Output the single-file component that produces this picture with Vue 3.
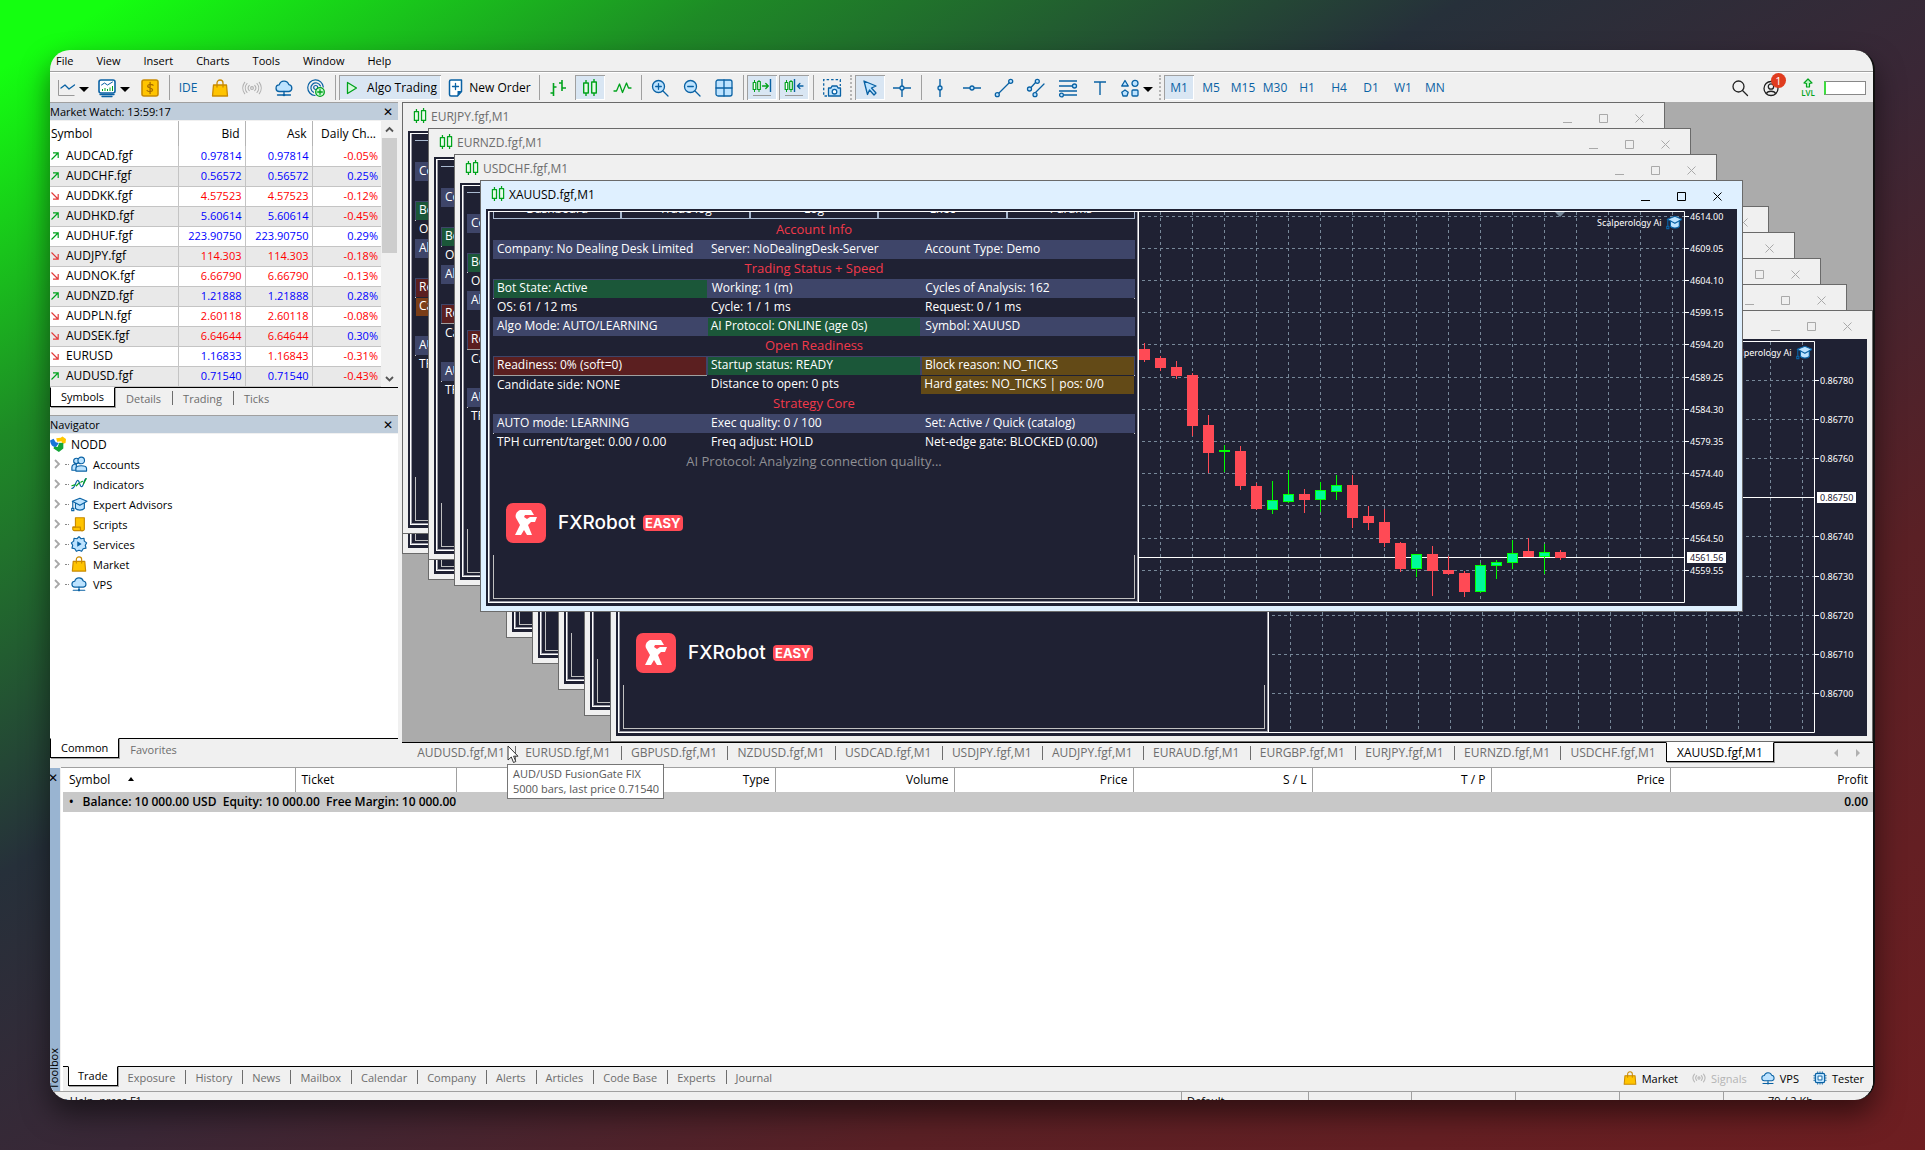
<script setup>
const menus = ['File', 'View', 'Insert', 'Charts', 'Tools', 'Window', 'Help']

const B = '#0a62a4'
const L = '#bde3ff'
const G = '#00a31c'
const Y = '#ffc400'
const O = '#c98a00'
const s = (c, w = 1.3) => `fill="none" stroke="${c}" stroke-width="${w}" stroke-linecap="round" stroke-linejoin="round"`
const f = (fill, c, w = 1.3) => `fill="${fill}" stroke="${c}" stroke-width="${w}" stroke-linejoin="round"`

const icons = {
  line: `<path d="M1.500 1v15.500h16" fill="none" stroke="#999"/><path d="M4 9l4-3 4 4 5.500-4" ${s(B)}/>`,
  indicators: `<rect x="1" y="1" width="16" height="13" rx="2" ${f('#fff', B, 1.6)}/><path d="M3.500 6l3-2 3 2 5-3" ${s(B, 1)}/><path d="M4.500 12v-2M7 12V9M9.500 12v-2M12 12V8.500M14.500 12V7" stroke="${G}" fill="none"/><path d="M2 15.500h14M4 17.500h10" ${s(B)}/>`,
  dollar: `<rect x="1" y="1" width="16" height="16" rx="2" ${f(Y, O, 1.6)}/><path d="M12 6.200C11 5 7 4.800 6.600 7c-.2 2.200 5 1.500 5 4-.3 2.200-4.500 2-5.500.500M9.100 3.500v11" ${s('#a86c00')}/>`,
  bag: `<path d="M2.500 6h13l1 11h-15z" ${f(Y, O)}/><path d="M6 8V4a3 3 0 0 1 6 0v4" ${s(O)}/>`,
  signal: `<g ${s('#b0b0b0', 1.1)}><circle cx="9" cy="9" r="1.400"/><path d="M6.300 6.300a4 4 0 0 0 0 5.400M11.700 6.300a4 4 0 0 1 0 5.400M4 4.500a7 7 0 0 0 0 9M14 4.500a7 7 0 0 1 0 9M1.700 3.300a9.500 9.500 0 0 0 0 11.400M16.300 3.300a9.500 9.500 0 0 1 0 11.400"/></g>`,
  cloud: `<path d="M4.500 12.500a3.300 3.300 0 0 1-.3-6.600 5 5 0 0 1 9.600-.3 3.500 3.500 0 0 1 .2 6.900z" ${f(L, B)}/><path d="M9 12.500v3M2.500 16h13" ${s(B)}/><circle cx="9" cy="16" r="1.300" fill="${B}"/>`,
  hosting: `<g ${s(B, 1.2)}><path d="M8 16.500A7.800 7.800 0 1 1 16.300 8M6.500 13.300A5 5 0 1 1 13.500 7"/><circle cx="8.700" cy="8.500" r="2"/></g><circle cx="13" cy="13" r="4.300" ${f('#c9f7d0', G)}/><path d="M13 10.700v4.600M10.700 13h4.600" ${s(G)}/>`,
  play: `<path d="M4.500 3.500l9 5.500-9 5.500z" ${f('#d5f8dc', G)}/>`,
  order: `<path d="M2.500 2.500a1.500 1.500 0 0 1 1.500-1.500h10.500v11.500l-4 4.500h-6.500a1.500 1.500 0 0 1-1.500-1.500z" ${f('#fff', B, 1.5)}/><path d="M14.500 12h-4v5z" fill="${B}"/><path d="M8.500 4.500v6M5.500 7.500h6" ${s(B)}/>`,
  bars: `<path d="M4.500 4v13M1.500 14h3M4.500 8h3M13 1v11M10 4h3M13 9h4" fill="none" stroke="${G}" stroke-width="1.600"/>`,
  candles: `<path d="M5 1v3M5 14v3M13 0v3M13 14v3" stroke="${G}" stroke-width="1.400"/><rect x="2.700" y="4" width="4.600" height="10" ${f('#e6fbe9', G, 1.4)}/><rect x="10.700" y="3" width="4.600" height="11" ${f('#e6fbe9', G, 1.4)}/>`,
  zig: `<path d="M1 12h2.500l3-7 3 8.500 4-9.500 2 5H18" ${s(G)}/>`,
  zoomin: `<circle cx="7.500" cy="7.500" r="6" ${f(L, B)}/><path d="M12 12l5 5M4.700 7.500h5.600M7.500 4.700v5.600" ${s(B)}/>`,
  zoomout: `<circle cx="7.500" cy="7.500" r="6" ${f(L, B)}/><path d="M12 12l5 5M4.700 7.500h5.600" ${s(B)}/>`,
  tile: `<rect x="1" y="1" width="16" height="16" rx="2" ${f(L, B)}/><path d="M9 1v16M1 9h16" ${s(B)}/>`,
  scroll: `<path d="M1.500 1v12M6 1v12" stroke="${G}"/><rect x=".2" y="3.500" width="2.600" height="7" ${f('#fff', G, 1.2)}/><rect x="4.700" y="2.500" width="2.600" height="8" ${f('#fff', G, 1.2)}/><path d="M9.500 7h5.500M12.800 4.500L15.300 7l-2.500 2.500" ${s(G)}/><path d="M17.500 0v13" stroke="${B}" stroke-width="1.400"/><path d="M0 16.500h18" stroke="#999"/>`,
  shift: `<path d="M1.500 1v12M6 1v12" stroke="${G}"/><rect x=".2" y="3.500" width="2.600" height="7" ${f('#fff', G, 1.2)}/><rect x="4.700" y="2.500" width="2.600" height="8" ${f('#fff', G, 1.2)}/><path d="M9.500 0v13" stroke="${B}" stroke-width="1.400"/><path d="M12.500 7H18M14.900 4.500L12.400 7l2.500 2.500" ${s(B)}/><path d="M0 16.500h18" stroke="#999"/>`,
  camera: `<path d="M4 17H.7V.7h16.600V7" fill="none" stroke="${B}" stroke-width="1.300" stroke-dasharray="2.500 2"/><path d="M5.500 9h2.500l1-2h5l1 2h2.500v8h-12z" ${f(L, B)}/><circle cx="11.500" cy="12.700" r="2.300" ${f('#fff', B)}/>`,
  cursor: `<path d="M3 2l12 5-4.500 2 4.500 5-2 2-4.500-5-2 4.500z" ${f(L, B)}/>`,
  cross: `<path d="M9 0v7M9 11v7M0 9h7M11 9h7" stroke="${B}" stroke-width="1.400"/><circle cx="9" cy="9" r="2" ${f(L, B)}/>`,
  vline: `<path d="M9 0v7M9 11v7" stroke="${B}" stroke-width="1.400"/><circle cx="9" cy="9" r="2" ${f(L, B)}/>`,
  hline: `<path d="M0 9h7M11 9h7" stroke="${B}" stroke-width="1.400"/><circle cx="9" cy="9" r="2" ${f(L, B)}/>`,
  trend: `<path d="M3.500 14.500l11-11" ${s(B)}/><circle cx="2.300" cy="15.700" r="2" ${f(L, B)}/><circle cx="15.700" cy="2.300" r="2" ${f(L, B)}/>`,
  channel: `<path d="M3.500 9l5.500-6M8 14l9-9" ${s(B)}/><circle cx="2.500" cy="10" r="2" ${f(L, B)}/><circle cx="10.300" cy="2.300" r="2" ${f(L, B)}/><circle cx="8" cy="15.700" r="2" ${f(L, B)}/>`,
  fibo: `<path d="M0 2h18M0 7h13.500M0 12h18M5 16h13" stroke="${B}" stroke-width="1.400"/><circle cx="15.500" cy="7" r="2" ${f(L, B)}/><circle cx="2.500" cy="16" r="1.900" ${f(L, B)}/>`,
  text: `<path d="M3 3h12M9 3v13" stroke="${B}" stroke-width="1.400"/>`,
  shapes: `<path d="M4 1.500l3.300 5.500H.7z" ${f(L, B)}/><circle cx="14" cy="4.300" r="3" ${f(L, B)}/><path d="M4 11l3.200 2.300-1.200 3.700H2l-1.200-3.700z" ${f(L, B)}/><rect x="11" y="11" width="6" height="6" rx="1" ${f(L, B)}/>`,
  search: `<circle cx="7.500" cy="7.500" r="5.500" ${s('#222')}/><path d="M11.500 11.500l5 5" ${s('#222')}/>`,
  user: `<circle cx="8" cy="9.500" r="7" ${s('#222')}/><circle cx="8" cy="7.500" r="2.700" ${s('#222')}/><path d="M3.500 14.500c1-3 8-3 9 0" ${s('#222')}/>`,
  level: `<path d="M9 1l4 4-2.500.5V9h-3V5.500L5 5z" ${f('#b9f5c3', G, 1.2)}/>`,
  accounts: `<circle cx="6" cy="5.500" r="3" ${f(L, B)}/><path d="M1 16v-3c0-3 3-4 5-4v7z" ${f(L, B)}/><circle cx="11.500" cy="5" r="3.700" ${f(L, B)}/><path d="M5.500 17v-3c0-4 12-4 12 0v3z" ${f(L, B)}/>`,
  wave: `<path d="M1 14c4 0 4-9 6.500-9s2 7 4.500 7 2-8 5-9" ${s(B)}/><path d="M1 11l3-1M6 11l3-3M11 7l2-1M14 9l3-6" ${s(G)}/>`,
  hat: `<path d="M5 8v6c2 2.500 8 2.500 10 0V8" ${f(L, B)}/><path d="M10 2.500L18 6l-8 4.500L1.500 6z" ${f(L, B)}/><path d="M2 6.500V14M.800 14h2.400v2.500H.800z" ${s(B)}/>`,
  script: `<path d="M5 2h10v12a2 2 0 0 1-2 2.500H4A2 2 0 0 1 2 14v-1.500h3z" ${f(Y, O)}/><path d="M2.500 12.500h8v2a2 2 0 0 0 2.500 2" ${s(O)}/>`,
  gear: `<path d="M9 .8l2.300 2.300 3.300-.6.4 3.300 2.600 1.900-1.500 2.700.8 3.200-3.200.8-1.700 2.800L9 16l-3 1.200-1.700-2.800-3.200-.8.8-3.200L.4 7.700 3 5.800l.4-3.300 3.300.6z" ${f(L, B)}/><path d="M7 6l5 3-5 3z" fill="${B}"/>`,
  chip: `<rect x="3" y="3" width="12" height="12" rx="2" ${f(L, B, 1.6)}/><rect x="6.500" y="6.500" width="5" height="5" ${f('#fff', B, 1.2)}/><path d="M6 .5V3M9 .5V3M12 .5V3M6 15v2.500M9 15v2.500M12 15v2.500M.5 6H3M.5 9H3M.5 12H3M15 6h2.500M15 9h2.500M15 12h2.500" stroke="${B}"/>`,
  logo: `<path d="M0 5l4-2 2.500 4 3.500 1-3 4c-3 1-6-1-7-7z" fill="#1673d8"/><path d="M7 2.500l5-.5 2-1.500 4 3-.5 4.500-4 1-.5-3-5 .500z" fill="#ffc800"/><path d="M15 8v6l-5 4-6-4 .5-2 4 .500 2-5z" fill="#13a538"/>`,
  sig2: `<g ${s('#b8b8b8', 1.4)}><circle cx="9" cy="9" r="1.400"/><path d="M6 6a4.500 4.500 0 0 0 0 6M12 6a4.500 4.500 0 0 1 0 6M3.200 4a8 8 0 0 0 0 10M14.800 4a8 8 0 0 1 0 10"/></g>`,
}

const tools = [
  { icon: 'line', caret: true }, { icon: 'indicators', caret: true }, { icon: 'dollar' }, { sep: 1 },
  { text: 'IDE' }, { icon: 'bag' }, { icon: 'signal' }, { icon: 'cloud' }, { icon: 'hosting' }, { sep: 1 },
  { icon: 'play', label: 'Algo Trading', on: true }, { icon: 'order', label: 'New Order' }, { sep: 1 },
  { icon: 'bars' }, { icon: 'candles', on: true }, { icon: 'zig' }, { sep: 1 },
  { icon: 'zoomin' }, { icon: 'zoomout' }, { icon: 'tile' }, { sep: 1 },
  { icon: 'scroll', on: true }, { icon: 'shift', on: true }, { sep: 1 }, { icon: 'camera' }, { sep: 2 },
  { icon: 'cursor', on: true }, { icon: 'cross' }, { sep: 1 },
  { icon: 'vline' }, { icon: 'hline' }, { icon: 'trend' }, { icon: 'channel' }, { icon: 'fibo' }, { icon: 'text' },
  { icon: 'shapes', caret: true }, { sep: 2 },
  { text: 'M1', on: true }, { text: 'M5' }, { text: 'M15' }, { text: 'M30' }, { text: 'H1' }, { text: 'H4' },
  { text: 'D1' }, { text: 'W1' }, { text: 'MN' },
]

const quotes = [
  ['AUDCAD.fgf', 1, '0.97814', '0.97814', 'uu', '-0.05%'],
  ['AUDCHF.fgf', 1, '0.56572', '0.56572', 'uu', '0.25%'],
  ['AUDDKK.fgf', 0, '4.57523', '4.57523', 'dd', '-0.12%'],
  ['AUDHKD.fgf', 1, '5.60614', '5.60614', 'uu', '-0.45%'],
  ['AUDHUF.fgf', 1, '223.90750', '223.90750', 'uu', '0.29%'],
  ['AUDJPY.fgf', 0, '114.303', '114.303', 'dd', '-0.18%'],
  ['AUDNOK.fgf', 0, '6.66790', '6.66790', 'dd', '-0.13%'],
  ['AUDNZD.fgf', 1, '1.21888', '1.21888', 'uu', '0.28%'],
  ['AUDPLN.fgf', 0, '2.60118', '2.60118', 'dd', '-0.08%'],
  ['AUDSEK.fgf', 0, '6.64644', '6.64644', 'dd', '0.30%'],
  ['EURUSD', 0, '1.16833', '1.16843', 'ud', '-0.31%'],
  ['AUDUSD.fgf', 1, '0.71540', '0.71540', 'uu', '-0.43%'],
]

const tree = [
  ['accounts', 'Accounts'], ['wave', 'Indicators'], ['hat', 'Expert Advisors'], ['script', 'Scripts'],
  ['gear', 'Services'], ['bag', 'Market'], ['cloud', 'VPS'],
]

const panelRows = [
  { head: 'Account Info' },
  { alt: 1, cells: [['Company: No Dealing Desk Limited'], ['Server: NoDealingDesk-Server'], ['Account Type: Demo']] },
  { head: 'Trading Status + Speed' },
  { alt: 1, cells: [['Bot State: Active', 'ok'], ['Working: 1 (m)'], ['Cycles of Analysis: 162']] },
  { cells: [['OS: 61 / 12 ms'], ['Cycle: 1 / 1 ms'], ['Request: 0 / 1 ms']] },
  { alt: 1, cells: [['Algo Mode: AUTO/LEARNING'], ['AI Protocol: ONLINE (age 0s)', 'ok'], ['Symbol: XAUUSD']] },
  { head: 'Open Readiness' },
  { alt: 1, cells: [['Readiness: 0% (soft=0)', 'bad'], ['Startup status: READY', 'ok'], ['Block reason: NO_TICKS', 'warn']] },
  { cells: [['Candidate side: NONE', 'side'], ['Distance to open: 0 pts'], ['Hard gates: NO_TICKS | pos: 0/0', 'warn']] },
  { head: 'Strategy Core' },
  { alt: 1, cells: [['AUTO mode: LEARNING'], ['Exec quality: 0 / 100'], ['Set: Active / Quick (catalog)']] },
  { cells: [['TPH current/target: 0.00 / 0.00'], ['Freq adjust: HOLD'], ['Net-edge gate: BLOCKED (0.00)']] },
]
// windows that only peek out from under the next one carry just the start of each row
const peekRows = panelRows.map((r) => (r.head ? { head: ' ' } : { alt: r.alt, cells: [[r.cells[0][0].slice(0, 2), r.cells[0][1]]] }))
const panelTabs = ['Dashboard', 'Trade log', 'Log', 'Exec', 'Params']

// body top, body bottom, wick top, wick bottom, rising
const goldCandles = [
  [140, 151, 134, 153], [149, 159, 147, 162], [158, 167, 152, 170], [166, 217, 164, 227], [216, 244, 206, 264],
  [241, 243, 236, 263, 1], [242, 277, 237, 281], [277, 300, 274, 301], [291, 301, 272, 305, 1], [285, 293, 261, 294, 1],
  [285, 291, 280, 304], [281, 291, 273, 303, 1], [276, 283, 266, 291, 1], [276, 309, 266, 319], [307, 314, 297, 321],
  [313, 334, 300, 338], [334, 360, 333, 363], [345, 360, 345, 368, 1], [345, 362, 337, 387], [361, 365, 347, 366],
  [364, 383, 362, 388], [356, 383, 354, 384, 1], [353, 357, 351, 370, 1], [344, 354, 331, 360, 1], [342, 348, 329, 348],
  [343, 348, 335, 365, 1], [343, 349, 341, 351],
]
const goldScale = [
  ['4614.00', 7], ['4609.05', 39], ['4604.10', 71], ['4599.15', 103], ['4594.20', 135], ['4589.25', 168],
  ['4584.30', 200], ['4579.35', 232], ['4574.40', 264], ['4569.45', 296], ['4564.50', 329], ['4559.55', 361],
]
const crossScale = [
  ['0.86780', 41], ['0.86770', 80], ['0.86760', 119], ['0.86740', 197], ['0.86730', 237], ['0.86720', 276],
  ['0.86710', 315], ['0.86700', 354],
]
const columns = Array.from({ length: 17 }, (_, i) => 22 + 32 * i)

const windows = [
  { id: 1, at: 0, tall: true },
  { id: 2, at: 26, tall: true },
  { id: 3, at: 104 },
  { id: 4, at: 130 },
  { id: 5, at: 156 },
  { id: 6, at: 182 },
  { id: 7, at: 208, brand: true, chart: { candles: [], scale: crossScale, price: ['0.86750', 158] } },
  { id: 8, at: 0, title: 'EURJPY.fgf,M1', rows: peekRows, hot: true },
  { id: 9, at: 26, title: 'EURNZD.fgf,M1', rows: peekRows },
  { id: 10, at: 52, title: 'USDCHF.fgf,M1', rows: peekRows },
  {
    id: 11, at: 78, title: 'XAUUSD.fgf,M1', active: true, rows: panelRows, brand: true,
    chart: { candles: goldCandles, scale: goldScale, price: ['4561.56', 348] },
  },
]

const chartTabs = ['AUDUSD', 'EURUSD', 'GBPUSD', 'NZDUSD', 'USDCAD', 'USDJPY', 'AUDJPY', 'EURAUD', 'EURGBP', 'EURJPY', 'EURNZD', 'USDCHF', 'XAUUSD']
const tradeCols = ['Symbol', 'Ticket', '', 'Type', 'Volume', 'Price', 'S / L', 'T / P', 'Price', 'Profit']
const boxTabs = ['Trade', 'Exposure', 'History', 'News', 'Mailbox', 'Calendar', 'Company', 'Alerts', 'Articles', 'Code Base', 'Experts', 'Journal']
const services = [['bag', 'Market'], ['sig2', 'Signals'], ['cloud', 'VPS'], ['chip', 'Tester']]
</script>

<template>
  <div class="desktop">
    <main class="app">
      <nav class="menubar">
        <button v-for="m in menus" :key="m">{{ m }}</button>
      </nav>

      <div class="toolbar">
        <template v-for="(t, i) in tools" :key="i">
          <span v-if="t.sep" class="sep" :class="{ dotted: t.sep === 2 }"></span>
          <button v-else class="tool" :class="{ on: t.on, wide: t.label, split: t.caret }" :aria-label="t.label || t.text || t.icon">
            <svg v-if="t.icon" viewBox="0 0 18 18" v-html="icons[t.icon]"></svg>
            <span v-if="t.label" class="label">{{ t.label }}</span>
            <span v-if="t.text">{{ t.text }}</span>
            <i v-if="t.caret" class="caret"></i>
          </button>
        </template>
        <div class="tray">
          <button class="tool" aria-label="Search"><svg viewBox="0 0 18 18" v-html="icons.search"></svg></button>
          <button class="tool account" aria-label="Account"><svg viewBox="0 0 18 18" v-html="icons.user"></svg><b>1</b></button>
          <button class="tool lvl"><svg viewBox="0 0 18 10" v-html="icons.level"></svg><span>LVL</span></button>
          <span class="meter"></span>
        </div>
      </div>

      <div class="middle">
        <aside class="side">
          <section>
            <header class="dock-title">Market Watch: 13:59:17<button aria-label="Close Market Watch">✕</button></header>
            <div class="watch">
              <table class="quotes">
                <colgroup><col class="c-sym"><col class="c-num"><col class="c-num"><col></colgroup>
                <thead><tr><th>Symbol</th><th>Bid</th><th>Ask</th><th>Daily Ch...</th></tr></thead>
                <tbody>
                  <tr v-for="q in quotes" :key="q[0]">
                    <td>
                      <svg class="dir" viewBox="0 0 8 8">
                        <path v-if="q[1]" d="M.5 7.500L7 1M2 .800h5.200V6" fill="none" stroke="#00a31c" stroke-width="1.200" />
                        <path v-else d="M.5.500L7 7M2 7.200h5.200V2" fill="none" stroke="#e23b3b" stroke-width="1.200" />
                      </svg>{{ q[0] }}
                    </td>
                    <td :class="q[4][0]">{{ q[2] }}</td>
                    <td :class="q[4][1]">{{ q[3] }}</td>
                    <td :class="q[5][0] === '-' ? 'd' : 'u'">{{ q[5] }}</td>
                  </tr>
                </tbody>
              </table>
              <div class="scroll">
                <svg viewBox="0 0 17 17"><path d="M5 10.500L8.500 7l3.500 3.500" fill="none" stroke="#555" stroke-width="1.800" /></svg>
                <i></i>
                <svg viewBox="0 0 17 17"><path d="M5 7l3.500 3.500L12 7" fill="none" stroke="#555" stroke-width="1.800" /></svg>
              </div>
            </div>
            <div class="tabs dock-tabs short">
              <button class="current">Symbols</button><button>Details</button><button>Trading</button><button>Ticks</button>
            </div>
          </section>

          <section class="navigator">
            <header class="dock-title">Navigator<button aria-label="Close Navigator">✕</button></header>
            <div class="tree">
              <p><svg viewBox="0 0 18 18" v-html="icons.logo"></svg>NODD</p>
              <ul>
                <li v-for="n in tree" :key="n[1]">
                  <svg class="twist" viewBox="0 0 6 10"><path d="M1 1l4 4-4 4" fill="none" stroke="#a8a8a8" stroke-width="1.800" /></svg>
                  <i></i>
                  <svg class="pic" viewBox="0 0 18 18" v-html="icons[n[0]]"></svg>{{ n[1] }}
                </li>
              </ul>
            </div>
            <div class="tabs dock-tabs"><button class="current">Common</button><button>Favorites</button></div>
          </section>
        </aside>

        <section class="work">
          <div class="mdi">
            <article v-for="w in windows" :key="w.id" class="win" :class="{ active: w.active, hot: w.hot, tall: w.tall }" :style="{ left: w.at + 'px', top: w.at + 'px' }">
              <header>
                <template v-if="w.title">
                  <svg class="mark" viewBox="0 0 18 18" v-html="icons.candles"></svg>
                  <h2>{{ w.title }}</h2>
                </template>
                <svg class="ctl" viewBox="0 0 82 12">
                  <path d="M0 9.500h9M36.500 1.500h8v8h-8zM72.500 1.500l8 8M80.500 1.500l-8 8" fill="none" stroke="currentColor" />
                </svg>
              </header>
              <div class="content">
                <div class="panel">
                  <div class="ptabs"><template v-if="w.active"><button v-for="p in panelTabs" :key="p">{{ p }}</button></template></div>
                  <div class="rows">
                    <template v-for="(r, i) in w.rows" :key="i">
                      <h3 v-if="r.head">{{ r.head }}</h3>
                      <div v-else class="prow" :class="{ alt: r.alt }">
                        <span v-for="c in r.cells" :key="c[0]" :class="c[1]">{{ c[0] }}</span>
                      </div>
                    </template>
                    <h3 v-if="w.active" class="note">AI Protocol: Analyzing connection quality...</h3>
                  </div>
                  <div class="brand">
                    <template v-if="w.brand">
                      <svg viewBox="0 0 40 40">
                        <rect width="40" height="40" rx="7" fill="#ff4a55" />
                        <path d="M14 7h11l3 5h-9l-1 2 3 2 3-2h7l-2 5h-4l-3 3 4 10h-5l-3-5-3 5h-6l5-10-4-7c-1-3 0-6 4-8z" fill="#fff" />
                      </svg>
                      <strong>FXRobot</strong><em>EASY</em>
                    </template>
                  </div>
                  <div class="frame"></div>
                </div>
                <svg v-if="w.chart" class="chart" viewBox="1 0 598 397">
                  <g class="grid">
                    <path v-for="x in columns" :key="'v' + x" :d="`M${x + 0.5} 3V393`" />
                    <path v-for="g in w.chart.scale" :key="g[0]" :d="`M4 ${g[1] + 0.5}H546`" />
                  </g>
                  <path class="axis" :d="`M0 2.500H546.500V393.500H0M0 ${w.chart.price[1] + 0.5}H546`" />
                  <g v-for="(c, i) in w.chart.candles" :key="i" :class="c[4] ? 'rise' : 'fall'">
                    <rect :x="6 + 16 * i" :y="c[2]" width="1" :height="c[3] - c[2]" />
                    <rect :x="1 + 16 * i" :y="c[0]" width="11" :height="c[1] - c[0]" />
                    <rect v-if="c[4] && c[1] - c[0] > 3" class="core" :x="2 + 16 * i" :y="c[0] + 1" width="9" :height="c[1] - c[0] - 2" />
                  </g>
                  <path d="M417 3h10l-5 5z" fill="#778899" />
                  <text x="459" y="17">Scalperology Ai</text>
                  <svg x="528" y="5" width="16" height="16" viewBox="0 0 18 18" v-html="icons.hat"></svg>
                  <g v-for="g in w.chart.scale" :key="'t' + g[0]">
                    <path class="axis" :d="`M547 ${g[1] + 0.5}h4`" />
                    <text x="552" :y="g[1] + 4">{{ g[0] }}</text>
                  </g>
                  <rect x="549" :y="w.chart.price[1] - 5" width="39" height="11" fill="#fff" />
                  <text x="552" :y="w.chart.price[1] + 4" class="now">{{ w.chart.price[0] }}</text>
                </svg>
              </div>
            </article>
          </div>
          <div class="tabs chart-tabs">
            <button v-for="c in chartTabs" :key="c" :class="{ current: c === 'XAUUSD' }">{{ c }}.fgf,M1</button>
            <span class="arrows"><i></i><i></i></span>
          </div>
          <div class="tip">AUD/USD FusionGate FIX<br>5000 bars, last price 0.71540</div>
          <svg class="pointer" viewBox="0 0 12 19"><path d="M1 1v14l3.300-3 2.200 5.500 2.300-1-2.200-5.300H11z" fill="#fff" stroke="#333" /></svg>
        </section>
      </div>

      <section class="toolbox">
        <div class="strip"><button aria-label="Close Toolbox">✕</button><span>Toolbox</span></div>
        <div class="box">
          <table class="trade">
            <colgroup><col class="t1"><col class="t2"><col class="t3"><col class="t4"><col v-for="n in 5" :key="n" class="t5"><col></colgroup>
            <thead><tr><th v-for="(c, i) in tradeCols" :key="i">{{ c }}<i v-if="!i"></i></th></tr></thead>
            <tbody>
              <tr>
                <td colspan="9"><span>•</span>Balance: 10 000.00 USD&nbsp; Equity: 10 000.00&nbsp; Free Margin: 10 000.00</td>
                <td>0.00</td>
              </tr>
            </tbody>
          </table>
          <div class="tabs box-tabs">
            <button v-for="(b, i) in boxTabs" :key="b" :class="{ current: !i }">{{ b }}</button>
            <div class="services">
              <a v-for="v in services" :key="v[1]" href="#" :class="{ off: v[1] === 'Signals' }"><svg viewBox="0 0 18 18" v-html="icons[v[0]]"></svg>{{ v[1] }}</a>
            </div>
          </div>
        </div>
      </section>

      <footer class="status">
        <span class="help">For Help, press F1</span><span class="profile">Default</span><span class="n1"></span><span class="n2"></span><span class="n2"></span><span class="n2"></span><span class="net">79 / 2 Kb</span>
      </footer>
    </main>
  </div>
</template>

<style>
body { margin: 0; }
</style>

<style scoped>
* { box-sizing: border-box; }
button { font: inherit; color: inherit; background: none; border: 0; padding: 0; margin: 0; }
h2, h3, p, ul { margin: 0; padding: 0; font-weight: 400; font-size: inherit; list-style: none; }
.desktop {
  min-height: 100vh; padding: 50px; display: flex;
  background: linear-gradient(to bottom right, #14ff10 3%, #1e8a26 19%, #26303a 38%, #3a2736 53%, #5a2025 73%, #6e1e21);
  font-family: "Open Sans", "Noto Sans", sans-serif; font-size: 12px; color: #000;
}
.app {
  flex: 1; min-width: 0; display: flex; flex-direction: column; overflow: hidden;
  background: #f0f0f0; border-radius: 20px; border-right: 2px solid #111; box-shadow: 0 14px 28px rgba(0, 0, 0, .5);
}
.menubar { display: flex; gap: 23px; height: 22px; padding: 0 0 1px 6px; border-bottom: 1px solid #a0a0a0; align-items: center; font-size: 11px; }
.toolbar { display: flex; height: 30px; padding: 2px 0 2px 2px; border-top: 1px solid #fff; align-items: stretch; color: #0a62a4; }
.tool { width: 32px; display: flex; align-items: center; justify-content: center; border: 1px solid transparent; border-width: 0 1px; }
.tool svg { width: 18px; height: 18px; flex: none; overflow: visible; }
.tool.on { background: #d9e6f3; background-clip: padding-box; box-shadow: inset 1px 1px #a0a0a0, inset -1px -1px #fff; }
.tool.split { width: 41px; justify-content: flex-start; padding-left: 4px; gap: 4px; }
.tool.wide { width: 104px; color: #000; gap: 6px; }
.tool.wide:not(.on) { width: 94px; gap: 4px; }
.caret { border: 5px solid transparent; border-top-color: #000; border-bottom: 0; margin-top: 3px; }
.sep { width: 6px; display: flex; justify-content: center; }
.sep::before { content: ""; border-left: 1px solid #a0a0a0; }
.sep.dotted::before { border-left: 2px dotted #b4b4b4; }
.tray { margin-left: auto; display: flex; align-items: center; padding-right: 7px; color: #000; }
.tray .tool { height: 100%; }
.account { position: relative; margin-right: 4px; }
.account b {
  position: absolute; right: 1px; top: -2px; width: 15px; height: 15px; border-radius: 8px; background: #e03c1f; color: #fff;
  font-size: 11px; line-height: 15px; font-weight: 400;
}
.tool.lvl { flex-direction: column; color: #00a31c; font-size: 8px; line-height: 9px; font-weight: 600; }
.tool.lvl svg { height: 10px; }
.meter { width: 42px; height: 14px; border: 1px solid #888; border-left: 2px solid #3fdc3f; background: #fff; }

.middle { display: flex; gap: 4px; border-bottom: 1px solid #a0a0a0; }
.side { width: 348px; flex: none; display: flex; flex-direction: column; border-top: 1px solid #a0a0a0; }
.dock-title { display: flex; justify-content: space-between; align-items: center; height: 18px; padding-right: 5px; background: #bfcddb; font-size: 11px; border-bottom: 1px solid #f0f0f0; }
.dock-title button { font-size: 12px; line-height: 12px; }
.watch { display: flex; background: #fff; height: 266px; overflow: hidden; }
.quotes { width: 331px; table-layout: fixed; border-collapse: collapse; }
.c-sym { width: 128px; }
.c-num { width: 67px; }
.quotes th { height: 25px; padding: 0 5px; font-weight: 400; text-align: right; }
.quotes th:first-child { text-align: left; padding: 0 1px; }
.quotes th + th { border-left: 1px solid #b4b4b4; }
.quotes td { height: 20px; line-height: 18px; padding: 0 3px; text-align: right; font-size: 11px; border-bottom: 1px solid #c4c4c4; }
.quotes td + td { border-left: 1px solid #c4c4c4; }
.quotes td:first-child { text-align: left; font-size: 12px; padding: 0 1px; }
.quotes tbody tr:nth-child(even) { background: #e9e9e9; }
.dir { width: 8px; height: 8px; margin-right: 7px; }
.u { color: #00f; }
.d { color: #f00; }
.scroll { width: 17px; background: #f0f0f0; display: flex; flex-direction: column; }
.scroll svg { width: 17px; height: 17px; }
.scroll i { height: 115px; margin: 0 1px auto; background: #cdcdcd; }
.tabs { display: flex; border-top: 1px solid #000; color: #6d6d6d; }
.tabs button { position: relative; height: 20px; line-height: 18px; }
.tabs button.current { margin-top: -1px; color: #000; background: #fff; border: 1px solid #000; border-top-color: #fff; line-height: 16px; box-shadow: 1px 1px #a0a0a0; }
.tabs button:not(.current) + button::before { content: ""; position: absolute; left: 0; top: 3px; height: 14px; border-left: 1px solid #6d6d6d; }
.tabs button.current::before { display: none; }
.dock-tabs { height: 29px; font-size: 11px; }
.dock-tabs.short { height: 28px; }
.dock-tabs button { padding: 0 11px; line-height: 17px; }
.dock-tabs .current { padding: 0 10px; }
.navigator { border-top: 1px solid #a0a0a0; }
.tree { height: 304px; background: #fff; font-size: 12px; }
.tree p, .tree li { display: flex; align-items: center; height: 20px; }
.tree svg { width: 16px; height: 16px; overflow: visible; }
.tree p { gap: 5px; }
.tree li { padding-left: 4px; font-size: 11px; }
.tree .pic { margin-right: 6px; }
.tree .twist { width: 6px; height: 10px; }
.tree i { width: 4px; margin: 0 2px 0 5px; border-top: 1px dotted #888; }

.work { flex: 1; min-width: 0; display: flex; flex-direction: column; position: relative; }
.mdi { flex: 1; position: relative; overflow: hidden; background: #ababab; }
.win { position: absolute; width: 1263px; height: 432px; border: 1px solid #6a6a6a; background: #f0f0f0; padding: 0 5px 5px; color: #6d6d6d; }
.win.tall { height: 452px; }
.win.active { background: #dff0ff; color: #000; }
.win header { height: 28px; display: flex; align-items: center; padding: 0 14px 2px 4px; }
.mark { width: 16px; height: 16px; }
.win h2 { margin-left: 3px; }
.ctl { width: 82px; height: 12px; margin: 5px 0 0 auto; color: #a9a9a9; }
.active .ctl { color: #000; }
.content { display: flex; height: 397px; background: #1f2133; padding-left: 2px; }
.tall .content { height: 417px; }
.panel { width: 651px; flex: none; margin: 2px 0 3px; padding: 0 3px 3px 4px; border: 1px solid #fff; box-shadow: inset 1px -1px #9a9aa5, inset -1px 0 #9a9aa5; display: flex; flex-direction: column; color: #fff; }
.ptabs { display: flex; flex: none; height: 7px; overflow: hidden; align-items: flex-end; margin-bottom: 1px; border-bottom: 1px solid #a9b9d0; }
.active .ptabs { border-bottom: 0; }
.ptabs button { flex: 1; height: 20px; line-height: 20px; border: 1px solid #a9b9d0; border-width: 0 1px 1px; flex-shrink: 0; text-align: center; }
.rows { height: 251px; flex: none; }
.panel h3 { height: 20px; line-height: 18px; text-align: center; color: #f2394a; font-size: 13px; }
.panel h3.note { color: #8f9095; }
.prow { display: flex; height: 19px; line-height: 17px; background: linear-gradient(#ccc, #ccc) 0 0 / 1px 1px no-repeat, linear-gradient(#ccc, #ccc) 100% 0 / 1px 1px no-repeat; }
.prow.alt { background: #3e4569; }
.prow span { flex: 1; padding-left: 4px; white-space: nowrap; }
.prow .ok, .prow .bad, .prow .warn, .hot .side { margin: 1px 1px 0; padding-left: 3px; line-height: 15px; }
.ok { background: #1b5739; }
.bad { background: #5b1f20; }
.warn { background: #634a17; }
.hot .side { width: auto; border-top: 0; background: #7a3d17; }
.brand { display: flex; flex: none; height: 40px; align-items: center; margin: 32px 0 12px 13px; }
.brand svg { width: 40px; height: 40px; }
.brand strong { margin: 0 7px 0 12px; font-family: Inter, sans-serif; font-size: 19px; font-weight: 500; line-height: 20px; }
.brand em { font-family: Inter, sans-serif; font-style: normal; font-weight: 700; font-size: 13px; line-height: 16px; width: 40px; text-align: center; background: #ff4a55; border-radius: 4px; }
.frame { flex: 1; border: 1px solid #c0c0c0; border-top: 0; }
.chart { width: 598px; height: 397px; font-family: "Noto Sans", sans-serif; font-size: 9px; fill: #fff; }
.grid { stroke: #778899; stroke-dasharray: 3 3; fill: none; }
.axis { stroke: #fff; fill: none; }
.fall { fill: #ff4a55; }
.rise { fill: #0f0; }
.core { fill: #00fa9a; }
.now { fill: #1f2133; }
.chart-tabs { height: 25px; padding: 0 99px 0 5px; position: relative; }
.chart-tabs button { flex: 1 1 auto; }
.chart-tabs button.current { line-height: 17px; }
.arrows { position: absolute; right: 13px; top: 6px; display: flex; gap: 18px; }
.arrows i { border: 4px solid transparent; border-right-color: #b0b0b0; border-left: 0; }
.arrows i + i { border: 4px solid transparent; border-left-color: #b0b0b0; border-right: 0; }
.tip { position: absolute; left: 105px; bottom: -32px; z-index: 3; width: 157px; height: 35px; padding: 1px 5px; border: 1px solid #767676; background: #fff; color: #575757; font-size: 11px; line-height: 15px; white-space: nowrap; }
.pointer { position: absolute; left: 105px; bottom: 3px; width: 12px; height: 19px; z-index: 4; }

.toolbox { flex: 1; display: flex; background: #fff; min-height: 200px; }
.strip { width: 10px; margin-right: 3px; background: #99b4d1; display: flex; flex-direction: column; justify-content: space-between; align-items: center; padding: 4px 0 2px; outline: 1px solid #f0f0f0; }
.strip button { font-size: 12px; line-height: 12px; margin-left: -4px; }
.strip span { writing-mode: vertical-rl; transform: rotate(180deg); font-size: 11px; line-height: 12px; margin-left: -2px; }
.box { flex: 1; min-width: 0; display: flex; flex-direction: column; justify-content: space-between; }
.trade { width: 100%; table-layout: fixed; border-collapse: collapse; }
.t1 { width: 232px; }
.t2 { width: 161px; }
.t3 { width: 141px; }
.t4 { width: 178px; }
.t5 { width: 179px; }
.trade th { height: 24px; padding: 0 5px 2px; font-weight: 400; text-align: right; }
.trade th:nth-child(-n+2) { text-align: left; padding: 0 6px 2px; }
.trade th + th { border-left: 1px solid #a0a0a0; }
.trade th i { display: inline-block; margin: 0 0 3px 18px; border: 3px solid transparent; border-bottom: 4px solid #000; border-top: 0; }
.trade td { height: 20px; padding: 0 5px; background: #c8c8c8; font-weight: 600; text-align: right; line-height: 16px; }
.trade td:first-child { text-align: left; padding: 0 6px; }
.trade td span { margin-right: 9px; }
.box-tabs { height: 25px; padding-left: 5px; background: #f0f0f0; font-size: 11px; }
.box-tabs button { padding: 0 10px; line-height: 17px; }
.box-tabs button.current { padding: 0 9px; }
.services { margin-left: auto; display: flex; gap: 14px; padding: 2px 9px 0 0; }
.services a { display: flex; align-items: center; gap: 5px; height: 18px; color: #000; text-decoration: none; }
.services a.off { color: #b4b4b4; }
.services svg { width: 14px; height: 14px; }
.status { flex: none; height: 9px; overflow: hidden; border-top: 1px solid #a0a0a0; display: flex; line-height: 18px; font-size: 11px; }
.status .help { flex: 1; }
.status span + span { border-left: 1px solid #a0a0a0; padding-left: 5px; }
.profile { width: 127px; }
.n1 { width: 103px; }
.n2 { width: 104px; }
.status .net { width: 150px; padding-left: 44px; }
</style>
